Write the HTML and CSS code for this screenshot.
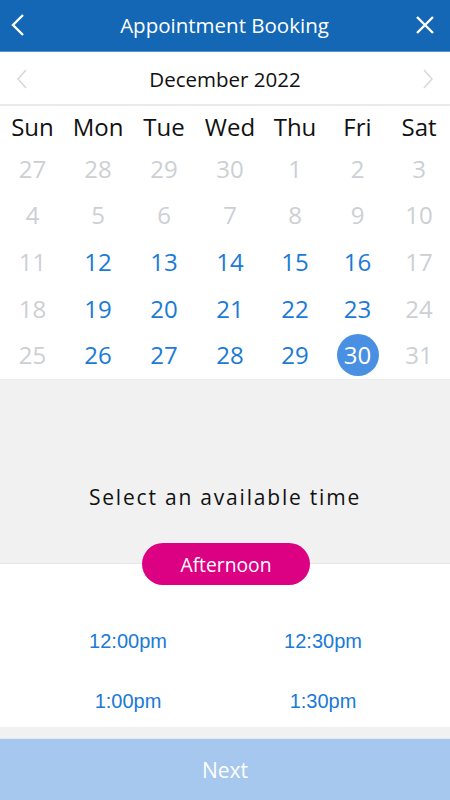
FILE: index.html
```
<!DOCTYPE html>
<html>
<head>
<meta charset="utf-8">
<link rel="stylesheet" href="styles.css">
</head>
<body>
<div class="app">
  <header class="topbar">
    <svg class="icon back" width="14" height="24" viewBox="0 0 14 24"><path d="M12 2 L2 12 L12 22" fill="none" stroke="#fff" stroke-width="2.4"/></svg>
    <h1 class="title">Appointment Booking</h1>
    <svg class="icon close" width="20" height="20" viewBox="0 0 20 20"><path d="M2 2 L18 18 M18 2 L2 18" fill="none" stroke="#fff" stroke-width="2.4"/></svg>
  </header>
  <div class="month">
    <svg class="chev" width="12" height="20" viewBox="0 0 12 20"><path d="M10 1 L2 10 L10 19" fill="none" stroke="#d5d8dc" stroke-width="1.5"/></svg>
    <span class="month-name">December 2022</span>
    <svg class="chev" width="12" height="20" viewBox="0 0 12 20"><path d="M2 1 L10 10 L2 19" fill="none" stroke="#d5d8dc" stroke-width="1.5"/></svg>
  </div>
  <div class="calendar">
    <div class="wk">Sun</div><div class="wk">Mon</div><div class="wk">Tue</div><div class="wk">Wed</div><div class="wk">Thu</div><div class="wk">Fri</div><div class="wk">Sat</div>
    <div class="d off">27</div><div class="d off">28</div><div class="d off">29</div><div class="d off">30</div><div class="d off">1</div><div class="d off">2</div><div class="d off">3</div>
    <div class="d off">4</div><div class="d off">5</div><div class="d off">6</div><div class="d off">7</div><div class="d off">8</div><div class="d off">9</div><div class="d off">10</div>
    <div class="d off">11</div><div class="d on">12</div><div class="d on">13</div><div class="d on">14</div><div class="d on">15</div><div class="d on">16</div><div class="d off">17</div>
    <div class="d off">18</div><div class="d on">19</div><div class="d on">20</div><div class="d on">21</div><div class="d on">22</div><div class="d on">23</div><div class="d off">24</div>
    <div class="d off">25</div><div class="d on">26</div><div class="d on">27</div><div class="d on">28</div><div class="d on">29</div><div class="d sel"><span>30</span></div><div class="d off">31</div>
  </div>
  <section class="prompt">
    <p class="prompt-text">Select an available time</p>
  </section>
  <section class="slots">
    <div class="pill">Afternoon</div>
    <div class="times">
      <div class="time">12:00pm</div><div class="time">12:30pm</div>
      <div class="time">1:00pm</div><div class="time">1:30pm</div>
    </div>
  </section>
  <div class="spacer"></div>
  <div class="next">Next</div>
</div>
</body>
</html>
```
FILE: styles.css
```
* { box-sizing: border-box; margin: 0; padding: 0; }
html, body { width: 450px; height: 800px; }
body { font-family: "Open Sans", sans-serif; background: #f1f1f1; overflow: hidden; }
.app { display: flex; flex-direction: column; height: 800px; }
.topbar {
  height: 52px; flex: none; background: #1467b5; display: grid;
  grid-template-columns: 1fr auto 1fr; align-items: center;
  padding: 0 15px 0 11px;
  border-bottom: 1px solid #5a91cc;
}
.icon { display: block; }
.back { margin-top: -1px; justify-self: start; }
.close { margin-top: -2px; justify-self: end; }
.title { color: #fff; font-weight: 400; font-size: 20.5px; line-height: 1; margin-left: 3px; }
.month {
  height: 54px; flex: none; background: #fff; display: flex; align-items: center;
  justify-content: space-between; padding: 1px 16px 0 16px;
  border-bottom: 2px solid #e8ebee;
}
.month-name { font-size: 20.5px; color: #111; }
.calendar {
  flex: none; background: #fff; display: grid;
  grid-template-columns: 65fr 66fr 66fr 66fr 64fr 61fr 62fr;
  grid-template-rows: 38px repeat(5, 46.6px); padding-top: 1px; height: 274px;
  border-bottom: 1px solid #ebedef;
}
.wk, .d { display: flex; align-items: center; justify-content: center; font-size: 24px; }
.wk { color: #111; }
.d.off { color: #ccd0d4; }
.d.on { color: #1a7ad6; }
.d.sel span {
  width: 42px; height: 42px; border-radius: 50%; background: #4a90e2; color: #fff;
  display: flex; align-items: center; justify-content: center; font-size: 24px;
}
.prompt { height: 183px; flex: none; display: flex; align-items: flex-end; justify-content: center; padding-bottom: 52px; }
.prompt-text { font-size: 21px; letter-spacing: 1.8px; color: #111; }
.slots { flex: none; background: #fff; border-top: 1px solid #e3e6ea; height: 164px; position: relative; }
.pill {
  position: absolute; left: 142px; top: -21px; width: 168px; height: 42px;
  border-radius: 21px; background: #dc0083; color: #fff; font-size: 19.3px;
  display: flex; align-items: center; justify-content: center;
}
.times {
  display: grid; grid-template-columns: 256px 134px; grid-auto-rows: 60px;
  padding-top: 47px;
}
.time {
  font-family: "Liberation Sans", Arial, sans-serif; font-size: 20px; color: #1a7ad6;
  display: flex; align-items: center; justify-content: center; height: 60px;
}
.spacer { height: 12px; flex: none; background: #f1f1f1; border-bottom: 1px solid #e3e6ea; }
.next {
  flex: 1; background: #a6c8ef; color: #fff; font-size: 21px;
  display: flex; align-items: center; justify-content: center;
}
```
